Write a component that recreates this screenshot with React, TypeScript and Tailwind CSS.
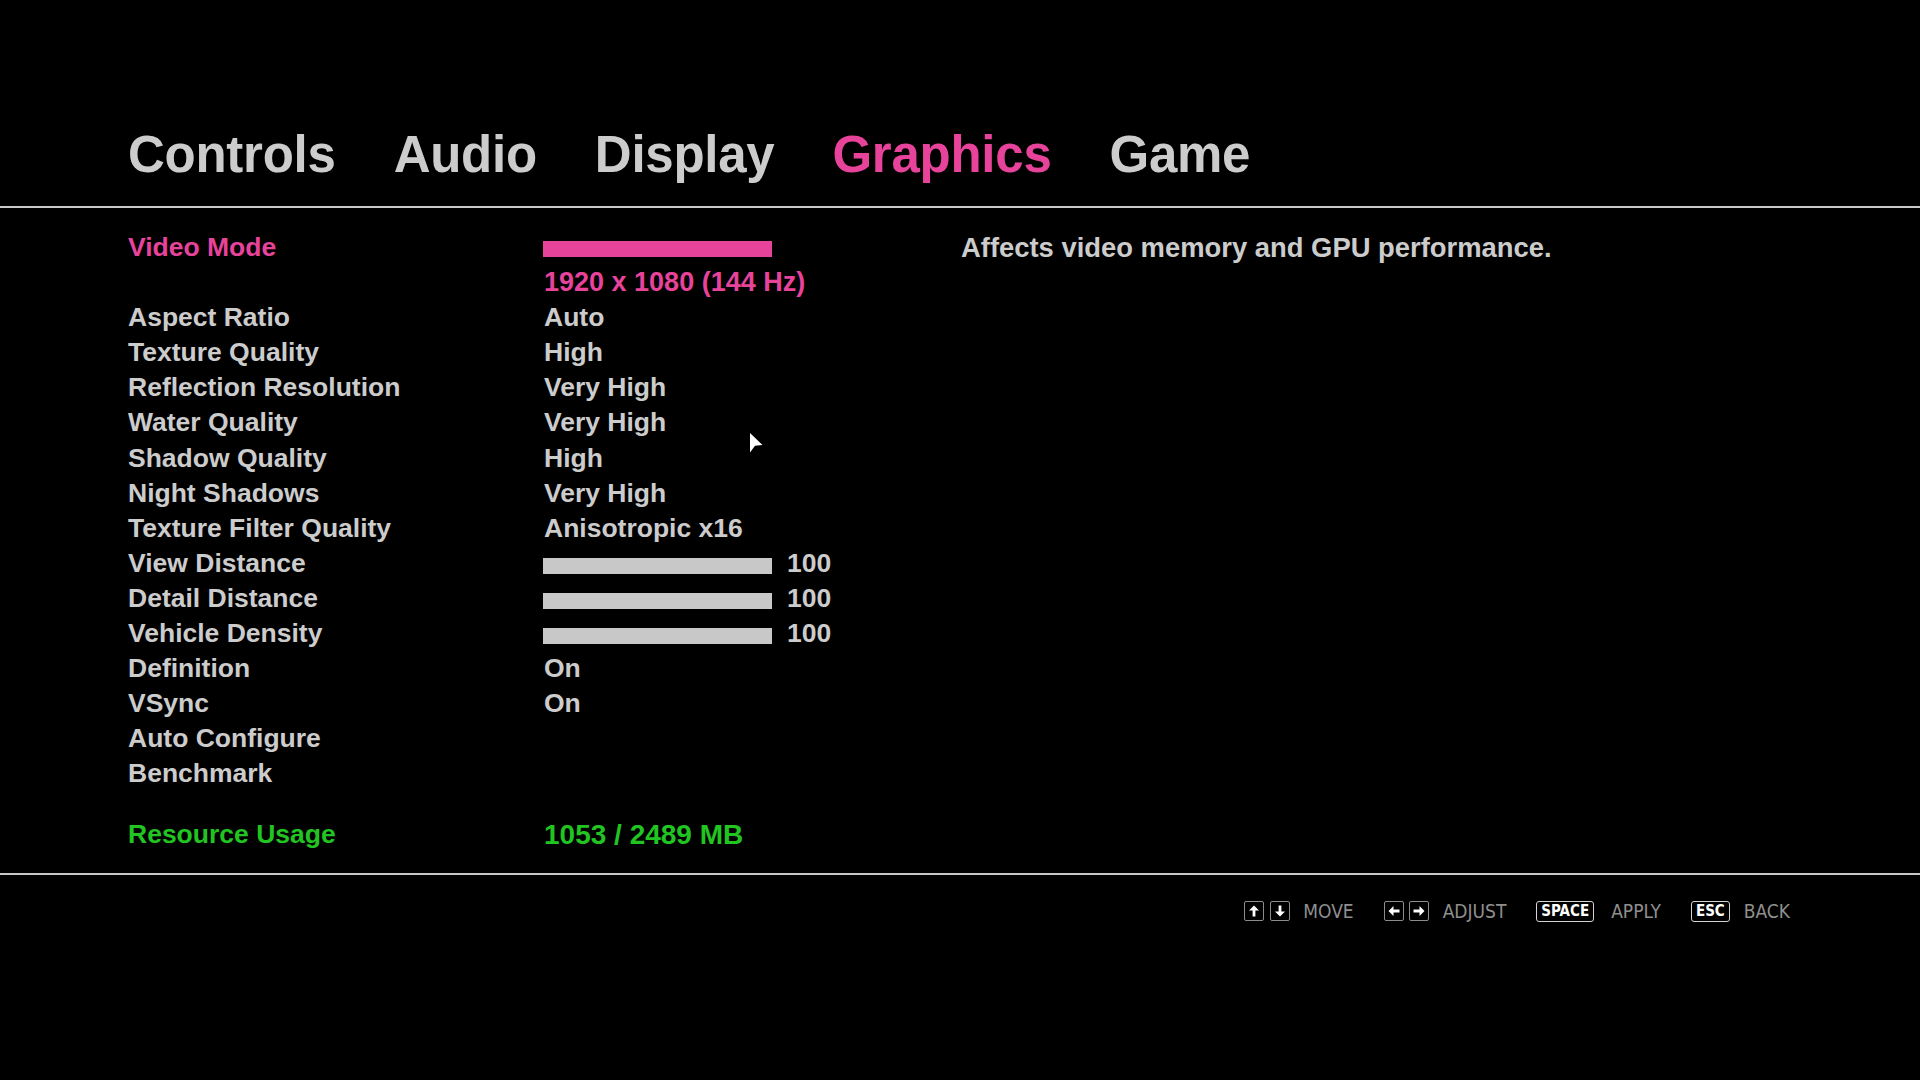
import type { ReactNode } from 'react';

const TABS = ['Controls', 'Audio', 'Display', 'Graphics', 'Game'];
const ACTIVE_TAB = 'Graphics';

type Row = {
  label: string;
  value?: string;
  slider?: number;
};

const ROWS: Row[] = [
  { label: 'Aspect Ratio', value: 'Auto' },
  { label: 'Texture Quality', value: 'High' },
  { label: 'Reflection Resolution', value: 'Very High' },
  { label: 'Water Quality', value: 'Very High' },
  { label: 'Shadow Quality', value: 'High' },
  { label: 'Night Shadows', value: 'Very High' },
  { label: 'Texture Filter Quality', value: 'Anisotropic x16' },
  { label: 'View Distance', slider: 100 },
  { label: 'Detail Distance', slider: 100 },
  { label: 'Vehicle Density', slider: 100 },
  { label: 'Definition', value: 'On' },
  { label: 'VSync', value: 'On' },
  { label: 'Auto Configure' },
  { label: 'Benchmark' },
];

function Key({ children, wide }: { children: ReactNode; wide?: boolean }) {
  return (
    <span
      className={
        wide
          ? 'flex h-[21px] items-center justify-center rounded-[3px] border-[1.5px] border-[#d4d4d4] px-[4px] text-[15px] font-bold leading-none text-white'
          : 'flex h-[20px] w-[20px] items-center justify-center rounded-[2px] border border-[#8c8c8c] text-white'
      }
    >
      {children}
    </span>
  );
}

function Arrow({ dir }: { dir: 'up' | 'down' | 'left' | 'right' }) {
  const rot = { up: 'rotate-0', down: 'rotate-180', left: '-rotate-90', right: 'rotate-90' }[dir];
  return (
    <svg className={`h-[12px] w-[12px] ${rot}`} viewBox="0 0 12 12" fill="white">
      <path d="M6 0.5 L11 5.5 H7.4 V11.5 H4.6 V5.5 H1 Z" />
    </svg>
  );
}

export default function App() {
  return (
    <div className="relative h-[1080px] w-full overflow-hidden bg-black font-['Liberation_Sans',Arial,sans-serif] font-bold text-[#cccccc]">
      {/* Tabs */}
      <nav className="flex gap-[58px] pl-[128px] pt-[129px] text-[51px] leading-[51px] tracking-[-0.005em]">
        {TABS.map((tab) => (
          <span key={tab} className={tab === ACTIVE_TAB ? 'text-[#e7439b]' : 'text-[#cccccc]'}>
            {tab}
          </span>
        ))}
      </nav>

      <div className="mt-[26px] h-[2px] bg-[#c8c8c8]" />

      {/* Settings */}
      <div className="flex pt-[22px]">
        <div className="w-[961px] pl-[128px] text-[26.5px] leading-[35.1px]">
          <div className="flex h-[35.1px] items-start">
            <span className="w-[415px] text-[#e7439b]">Video Mode</span>
            <span className="mt-[11px] h-[16px] w-[229px] bg-[#e7439b]" />
          </div>
          <div className="flex h-[35.1px] items-start">
            <span className="w-[415px]" />
            <span className="pl-[1px] text-[27px] text-[#e7439b]">1920 x 1080 (144 Hz)</span>
          </div>

          {ROWS.map((row) => (
            <div key={row.label} className="flex h-[35.1px] items-start">
              <span className="w-[415px]">{row.label}</span>
              {row.value && <span className="pl-[1px]">{row.value}</span>}
              {row.slider !== undefined && (
                <div className="flex items-start">
                  <span className="mt-[12px] h-[16px] w-[229px] bg-[#c8c8c8]" />
                  <span className="ml-[15px]">{row.slider}</span>
                </div>
              )}
            </div>
          ))}

          <div className="mt-[25px] flex h-[35.1px] items-start text-[#21c421]">
            <span className="w-[415px]">Resource Usage</span>
            <span className="pl-[1px] text-[28px]">1053 / 2489 MB</span>
          </div>
        </div>

        <p className="text-[27.4px] leading-[35.1px]">Affects video memory and GPU performance.</p>
      </div>

      <div className="mt-[21px] h-[2px] bg-[#c8c8c8]" />

      {/* Button hints */}
      <div className="mt-[26px] flex items-center justify-end gap-[30px] pr-[130px] font-['DejaVu_Sans',sans-serif] text-[19px] font-normal leading-none text-[#8f8f8f] font-stretch-condensed">
        <div className="flex items-center">
          <div className="flex gap-[6px]">
            <Key>
              <Arrow dir="up" />
            </Key>
            <Key>
              <Arrow dir="down" />
            </Key>
          </div>
          <span className="ml-[13px]">MOVE</span>
        </div>
        <div className="flex items-center">
          <div className="flex gap-[5px]">
            <Key>
              <Arrow dir="left" />
            </Key>
            <Key>
              <Arrow dir="right" />
            </Key>
          </div>
          <span className="ml-[14px]">ADJUST</span>
        </div>
        <div className="flex items-center">
          <Key wide>SPACE</Key>
          <span className="ml-[17px]">APPLY</span>
        </div>
        <div className="flex items-center">
          <Key wide>ESC</Key>
          <span className="ml-[14px]">BACK</span>
        </div>
      </div>

      {/* Mouse cursor */}
      <svg className="absolute left-[750px] top-[433px] h-[20px] w-[13px]" viewBox="0 0 13 20" fill="white">
        <path d="M0 0 L12.5 12 L5 12.8 L0 19.5 Z" />
      </svg>
    </div>
  );
}
